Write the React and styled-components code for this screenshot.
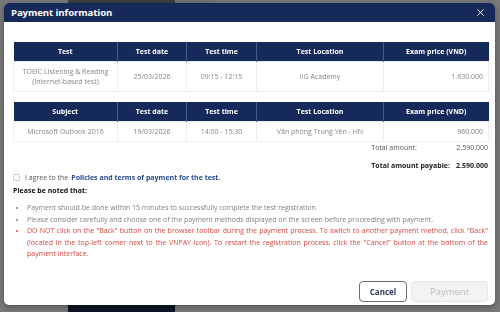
import React from 'react';
import styled, { createGlobalStyle } from 'styled-components';

const GlobalStyle = createGlobalStyle`
    html, body {
        margin: 0;
        padding: 0;
        width: 500px;
        height: 312px;
        overflow: hidden;
        font-family: "Open Sans", "Noto Sans", sans-serif;
    }
`;

const Page = styled.div`
    width: 500px;
    height: 312px;
    background: #f2f2f2;
    display: flex;
    flex-direction: column;
    justify-content: space-between;
    padding-left: 68px;
    box-sizing: border-box;
`;

const TabRow = styled.div`
    display: flex;
    height: 4px;
    overflow: hidden;
`;

const Tab = styled.div`
    width: ${(p) => p.$w}px;
    background: ${(p) => (p.$active ? '#7c7c7c' : '#e6e6e6')};
`;

const BottomBar = styled.div`
    width: 107px;
    height: 7px;
    background: #1c2a4a;
`;

const Overlay = styled.div`
    position: fixed;
    inset: 0;
    background: rgba(0, 0, 0, 0.5);
    display: flex;
    padding: 3px 5px 7px 4px;
    box-sizing: border-box;
`;

const Modal = styled.div`
    flex: 1;
    display: flex;
    flex-direction: column;
    background: #fff;
    border-radius: 5px;
    box-shadow: 0 2px 6px rgba(0, 0, 0, 0.35);
    overflow: hidden;
`;

const Header = styled.div`
    height: 19px;
    background: #15295b;
    color: #fff;
    display: flex;
    align-items: center;
    justify-content: space-between;
    padding: 0 11px 0 7px;
`;

const Title = styled.h2`
    margin: 0;
    font-size: 9.6px;
    font-weight: 700;
    letter-spacing: -0.1px;
`;

const Close = styled.button`
    border: none;
    background: none;
    padding: 0;
    display: flex;
    cursor: pointer;
`;

const Body = styled.div`
    flex: 1;
    display: flex;
    flex-direction: column;
    padding: 20px 7px 0 9px;
`;

const Table = styled.table`
    width: 100%;
    border-collapse: collapse;
    table-layout: fixed;
    margin-bottom: ${(p) => p.$gap || 0}px;
`;

const Th = styled.th`
    background: #15295b;
    color: #fff;
    font-size: 7px;
    font-weight: 700;
    height: 19px;
    padding: 0 4px;
    border-left: 1px solid #4a5c86;
    &:first-child {
        border-left: none;
    }
`;

const Td = styled.td`
    font-size: 7px;
    color: #858585;
    text-align: ${(p) => p.$align || 'center'};
    height: ${(p) => p.$h || 19}px;
    line-height: 10px;
    padding: 0 5px;
    border: 1px solid #eeeeee;
`;

const Totals = styled.div`
    display: grid;
    grid-template-columns: auto auto;
    justify-content: end;
    column-gap: 6px;
    row-gap: 8px;
    margin-top: 1px;
    font-size: 7px;
    line-height: 10px;
    color: #555;
`;

const TotalValue = styled.span`
    text-align: right;
    font-weight: ${(p) => (p.$bold ? 700 : 400)};
    color: ${(p) => (p.$bold ? '#222' : '#555')};
`;

const TotalLabel = styled.span`
    font-weight: ${(p) => (p.$bold ? 700 : 400)};
    color: ${(p) => (p.$bold ? '#222' : '#555')};
`;

const AgreeRow = styled.label`
    display: flex;
    align-items: center;
    gap: 5px;
    margin-top: 2px;
    font-size: 7px;
    color: #555;
`;

const Check = styled.span`
    width: 5px;
    height: 5px;
    border: 1px solid #cfcfcf;
    border-radius: 1px;
`;

const Link = styled.a`
    color: #2a4a8e;
    font-weight: 700;
    margin-left: 3px;
    text-decoration: none;
`;

const NoteTitle = styled.div`
    margin-top: 4px;
    font-size: 7px;
    font-weight: 700;
    color: #111;
`;

const Notes = styled.ul`
    margin: 7px 0 0;
    padding-left: 14px;
    font-size: 7px;
    line-height: 11.5px;
`;

const Note = styled.li`
    color: ${(p) => (p.$warn ? '#d4463f' : '#808080')};
    text-align: justify;
`;

const Footer = styled.div`
    display: flex;
    justify-content: flex-end;
    gap: 4px;
    padding: 0 7px 3px 0;
`;

const Button = styled.button`
    height: 21px;
    border-radius: 4px;
    font-family: inherit;
    cursor: pointer;
    ${(p) =>
        p.$primary
            ? `
        width: 77px;
        background: #f3f3f3;
        border: 1px solid #e6e6e6;
        color: #bdbdbd;
        font-size: 9.5px;
    `
            : `
        width: 48px;
        background: #fff;
        border: 1px solid #6a6a6a;
        color: #2b3a55;
        font-size: 8px;
        font-weight: 700;
    `}
`;

const cols = [104, 69, 70, 127, 105];

const Cols = () => (
    <colgroup>
        {cols.map((w, i) => (
            <col key={i} style={{ width: w }} />
        ))}
    </colgroup>
);

const App = () => {
    return (
        <>
            <GlobalStyle />
            <Page>
                <TabRow>
                    <Tab $w={107} $active />
                    <Tab $w={40} />
                </TabRow>
                <BottomBar />
            </Page>
            <Overlay>
                <Modal>
                    <Header>
                        <Title>Payment information</Title>
                        <Close aria-label="close">
                            <svg width="7" height="7" viewBox="0 0 10 10">
                                <path d="M1 1L9 9M9 1L1 9" stroke="#fff" strokeWidth="1.4" strokeLinecap="round" />
                            </svg>
                        </Close>
                    </Header>
                    <Body>
                        <Table $gap={10}>
                            <Cols />
                            <thead>
                                <tr>
                                    <Th>Test</Th>
                                    <Th>Test date</Th>
                                    <Th>Test time</Th>
                                    <Th>Test Location</Th>
                                    <Th>Exam price (VND)</Th>
                                </tr>
                            </thead>
                            <tbody>
                                <tr>
                                    <Td $h={29}>TOEIC Listening &amp; Reading<br />(Internet-based test)</Td>
                                    <Td $h={29}>25/03/2026</Td>
                                    <Td $h={29}>09:15 - 12:15</Td>
                                    <Td $h={29}>IIG Academy</Td>
                                    <Td $h={29} $align="right">1.630.000</Td>
                                </tr>
                            </tbody>
                        </Table>
                        <Table>
                            <Cols />
                            <thead>
                                <tr>
                                    <Th>Subject</Th>
                                    <Th>Test date</Th>
                                    <Th>Test time</Th>
                                    <Th>Test Location</Th>
                                    <Th>Exam price (VND)</Th>
                                </tr>
                            </thead>
                            <tbody>
                                <tr>
                                    <Td>Microsoft Outlook 2016</Td>
                                    <Td>19/03/2026</Td>
                                    <Td>14:00 - 15:30</Td>
                                    <Td>Văn phòng Trung Yên - HN</Td>
                                    <Td $align="right">960.000</Td>
                                </tr>
                            </tbody>
                        </Table>
                        <Totals>
                            <TotalLabel>Total amount:</TotalLabel>
                            <TotalValue>2.590.000</TotalValue>
                            <TotalLabel $bold>Total amount payable:</TotalLabel>
                            <TotalValue $bold>2.590.000</TotalValue>
                        </Totals>
                        <AgreeRow>
                            <Check />
                            <span>
                                I agree to the
                                <Link href="#">Policies and terms of payment for the test.</Link>
                            </span>
                        </AgreeRow>
                        <NoteTitle>Please be noted that:</NoteTitle>
                        <Notes>
                            <Note>Payment should be done within 15 minutes to successfully complete the test registration.</Note>
                            <Note>Please consider carefully and choose one of the payment methods displayed on the screen before proceeding with payment.</Note>
                            <Note $warn>
                                DO NOT click on the "Back" button on the browser toolbar during the payment process. To switch to another payment method, click "Back" (located in the top-left corner next to the VNPAY icon). To restart the registration process, click the "Cancel" button at the bottom of the payment interface.
                            </Note>
                        </Notes>
                    </Body>
                    <Footer>
                        <Button>Cancel</Button>
                        <Button $primary disabled>Payment</Button>
                    </Footer>
                </Modal>
            </Overlay>
        </>
    );
};

export default App;
